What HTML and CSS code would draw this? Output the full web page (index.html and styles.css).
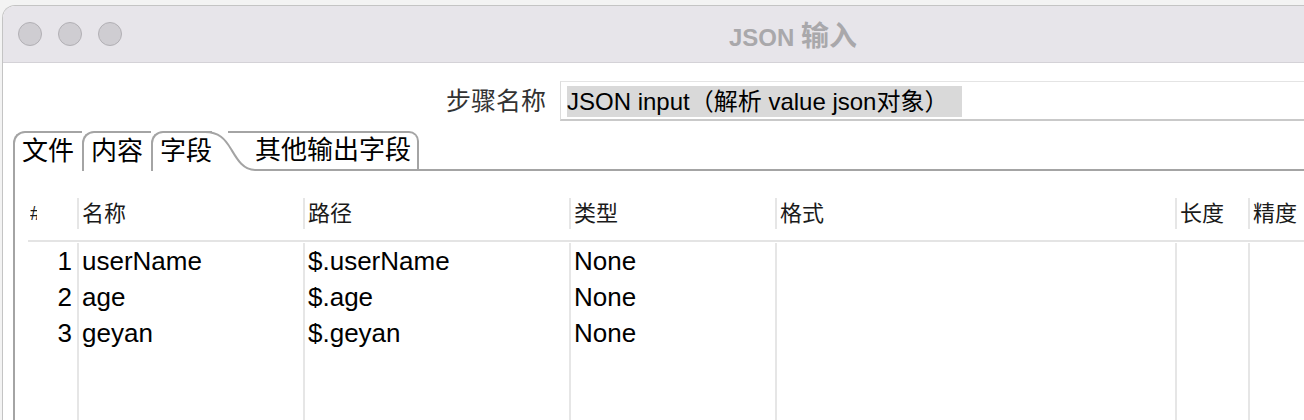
FILE: index.html
```html
<!DOCTYPE html>
<html lang="zh">
<head>
<meta charset="utf-8">
<title>JSON 输入</title>
<link rel="stylesheet" href="styles.css">
</head>
<body>
<div class="window">
  <div class="titlebar">
    <div class="lights">
      <span class="light"></span>
      <span class="light"></span>
      <span class="light"></span>
    </div>
    <div class="title">JSON <span class="title-cjk">输入</span></div>
    <div></div>
  </div>
  <div class="content">
    <div class="step-row">
      <span class="step-label">步骤名称</span>
      <div class="step-input"><span class="selected-text">JSON input（解析 value json对象）</span></div>
    </div>
    <div class="tabs">
      <div class="tab tab-first">文件</div>
      <div class="tab">内容</div>
      <div class="tab tab-active">字段</div>
      <svg class="tab-curve" width="50" height="40" viewBox="0 0 50 40">
        <path d="M0 1 C14 1 20 8 26 18 C32 28 38 39 50 39" fill="none" stroke="#a4a4a4" stroke-width="2"/>
        <path d="M23 1 L50 1" fill="none" stroke="#a4a4a4" stroke-width="2"/>
      </svg>
      <div class="tab tab-last">其他输出字段</div>
      <div class="tab-fill"></div>
    </div>
    <div class="panel">
      <div class="thead">
        <div class="th th-num"><span class="hash">#</span></div>
        <div class="th">名称</div>
        <div class="th">路径</div>
        <div class="th">类型</div>
        <div class="th">格式</div>
        <div class="th">长度</div>
        <div class="th">精度</div>
      </div>
      <div class="tbody">
        <div class="td td-num">1</div><div class="td">userName</div><div class="td">$.userName</div><div class="td">None</div><div class="td"></div><div class="td"></div><div class="td"></div>
        <div class="td td-num">2</div><div class="td">age</div><div class="td">$.age</div><div class="td">None</div><div class="td"></div><div class="td"></div><div class="td"></div>
        <div class="td td-num">3</div><div class="td">geyan</div><div class="td">$.geyan</div><div class="td">None</div><div class="td"></div><div class="td"></div><div class="td"></div>
        <div class="td td-num"></div><div class="td"></div><div class="td"></div><div class="td"></div><div class="td"></div><div class="td"></div><div class="td"></div>
        <div class="td td-num"></div><div class="td"></div><div class="td"></div><div class="td"></div><div class="td"></div><div class="td"></div><div class="td"></div>
      </div>
    </div>
  </div>
</div>
</body>
</html>
```

FILE: styles.css
```css
html, body {
  margin: 0;
  padding: 0;
}
body {
  width: 1304px;
  height: 420px;
  overflow: hidden;
  background: #f3f3f3;
  font-family: "Liberation Sans", "Noto Sans CJK SC", sans-serif;
  color: #000;
}
.window {
  margin: 5px 0 0 2px;
  width: 1580px;
  height: 415px;
  background: #fff;
  border-top: 1px solid #c4c4c4;
  border-left: 1px solid #c4c4c4;
  border-top-left-radius: 13px;
  overflow: hidden;
}
.titlebar {
  height: 56px;
  background: #e7e5ea;
  border-bottom: 1px solid #d4d2d7;
  display: grid;
  grid-template-columns: 1fr auto 1fr;
  align-items: center;
}
.lights {
  display: flex;
  gap: 16px;
  padding-left: 15px;
}
.light {
  width: 22px;
  height: 22px;
  border-radius: 50%;
  background: #cfcdd2;
  border: 1px solid #b2b0b5;
}
.title {
  font-weight: bold;
  font-size: 24px;
  color: #a9a8ab;
}
.title-cjk {
  font-size: 28px;
}
.content {
  padding-top: 18px;
}
.step-row {
  display: flex;
  align-items: center;
  padding-left: 443px;
  gap: 14px;
}
.step-label {
  font-size: 25px;
  color: #333;
  line-height: 40px;
}
.step-input {
  flex: 1;
  border-top: 1px solid #e4e4e4;
  border-left: 1px solid #dcdcdc;
  border-bottom: 2px solid #c9c9c9;
  padding: 4px 0 0 6px;
  height: 33px;
}
.selected-text {
  display: inline-block;
  background: #d9d9d9;
  font-size: 24px;
  line-height: 31px;
  height: 31px;
  padding-right: 14px;
  white-space: nowrap;
}
.tabs {
  display: flex;
  margin: 10px 0 0 10px;
  height: 40px;
}
.tab {
  box-sizing: border-box;
  height: 40px;
  border-top: 2px solid #a4a4a4;
  border-left: 2px solid #a4a4a4;
  border-top-left-radius: 12px;
  padding: 0 8px 0 7px;
  font-size: 26px;
  line-height: 37px;
  white-space: nowrap;
  background: #fff;
}
.tab-active {
  padding-right: 0;
}
.tab-curve {
  flex: none;
  display: block;
  margin-left: -7px;
}
.tab-last {
  border-left: none;
  border-top-left-radius: 0;
  border-right: 2px solid #a4a4a4;
  border-bottom: 2px solid #a4a4a4;
  border-top-right-radius: 10px;
  padding: 0 6px 0 0;
  line-height: 35px;
}
.tab-fill {
  flex: 1;
  border-bottom: 2px solid #a4a4a4;
}
.panel {
  margin-left: 10px;
  border-left: 2px solid #a4a4a4;
  padding: 27px 0 0 13px;
  height: 250px;
  overflow: hidden;
}
.thead,
.tbody {
  display: grid;
  grid-template-columns: 49px 226px 266px 206px 400px 73px 300px;
}
.thead {
  padding-bottom: 11px;
  border-bottom: 2px solid #e4e4e4;
}
.th {
  height: 31px;
  line-height: 31px;
  font-size: 22px;
  color: #1a1a1a;
  border-left: 2px solid #e6e6e6;
  padding-left: 3px;
  white-space: nowrap;
  overflow: hidden;
}
.th-num {
  border-left: none;
  padding-left: 2px;
}
.hash {
  display: inline-block;
  width: 7px;
  overflow: hidden;
  font-size: 20px;
  vertical-align: top;
}
.tbody {
  grid-auto-rows: 36px;
  padding-top: 1px;
}
.td {
  font-size: 26px;
  line-height: 36px;
  border-left: 2px solid #e6e6e6;
  padding-left: 3px;
  white-space: nowrap;
  overflow: hidden;
}
.td-num {
  border-left: none;
  text-align: right;
  padding: 0 5px 0 0;
}
```
